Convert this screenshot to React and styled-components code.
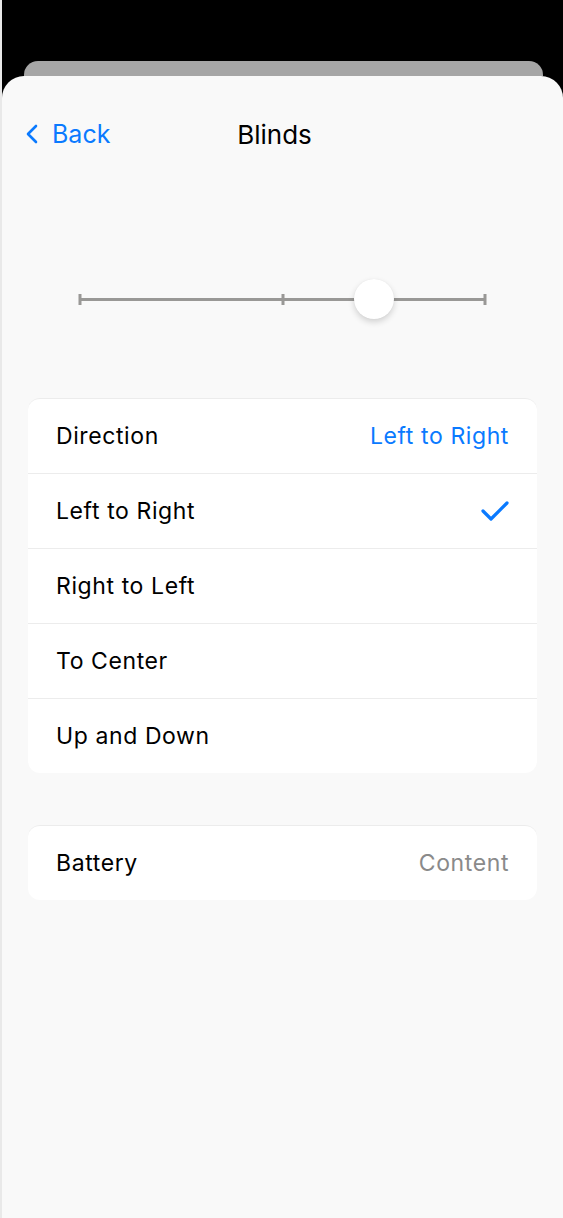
import React from 'react'
import styled, { createGlobalStyle } from 'styled-components'

const GlobalStyle = createGlobalStyle`
    html, body {
        margin: 0;
        padding: 0;
        background: #000;
    }
    body {
        font-family: Inter, "Noto Sans", "Liberation Sans", sans-serif;
        -webkit-font-smoothing: antialiased;
    }
`;

const Screen = styled.div`
    width: 563px;
    height: 1218px;
    box-sizing: border-box;
    padding-top: 61px;
    border-left: 2px solid #e9e9e9;
    background: #000;
    overflow: hidden;
    display: flex;
    flex-direction: column;
`;

const BackSheet = styled.div`
    height: 15px;
    margin: 0 20px 0 22px;
    background: #a6a6a6;
    border-radius: 14px 14px 0 0;
`;

const Sheet = styled.div`
    flex: 1;
    background: #f9f9f9;
    border-radius: 22px 22px 0 0;
    display: flex;
    flex-direction: column;
`;

const NavBar = styled.div`
    height: 116px;
    display: grid;
    grid-template-columns: 1fr auto 1fr;
    align-items: center;
    padding: 0 26px 0 24px;
    box-sizing: border-box;
`;

const BackButton = styled.button`
    display: flex;
    align-items: center;
    gap: 14px;
    border: none;
    background: none;
    padding: 0;
    color: #0a7aff;
    font-family: inherit;
    font-size: 25px;
    cursor: pointer;
    justify-self: start;
`;

const Title = styled.div`
    font-size: 26px;
    color: #000;
    margin-right: 14px;
`;

const SliderWrap = styled.div`
    height: 162px;
    display: flex;
    align-items: center;
    padding: 0 78px 0 78px;
    margin: 26px 0 18px;
`;

const Track = styled.div`
    position: relative;
    flex: 1;
    height: 3px;
    background: #999896;
`;

const Tick = styled.div`
    position: absolute;
    top: -4px;
    width: 3px;
    height: 11px;
    background: #999896;
    left: ${p => p.$at};
    transform: translateX(-50%);
`;

const Thumb = styled.div`
    position: absolute;
    top: 50%;
    width: 40px;
    height: 40px;
    border-radius: 50%;
    background: #fff;
    box-shadow: 0 3px 6px rgba(0, 0, 0, 0.16), 0 0 1px rgba(0, 0, 0, 0.08);
    transform: translate(-50%, -50%);
`;

const Card = styled.div`
    margin: 0 26px;
    background: #fff;
    border-top: 1px solid #ececec;
    border-radius: 12px;
    overflow: hidden;
    & + & {
        margin-top: 52px;
    }
`;

const Row = styled.div`
    height: 74px;
    display: flex;
    align-items: center;
    justify-content: space-between;
    padding: 0 28px 0 28px;
    font-size: 23px;
    letter-spacing: 0.6px;
    color: #000;
    & + & {
        border-top: 1px solid #ececec;
    }
`;

const Value = styled.span`
    color: ${p => (p.$muted ? '#8a8a8a' : '#0a7aff')};
`;

const Chevron = () => (
    <svg width="12" height="20" viewBox="0 0 12 20" fill="none">
        <path d="M10 2 L2 10 L10 18" stroke="#0a7aff" strokeWidth="2.6" strokeLinecap="round" strokeLinejoin="round" />
    </svg>
);

const Check = () => (
    <svg width="28" height="22" viewBox="0 0 28 22" fill="none">
        <path d="M2 11 L10 19 L26 3" stroke="#0a7aff" strokeWidth="3.2" strokeLinecap="round" strokeLinejoin="round" />
    </svg>
);

const options = ['Left to Right', 'Right to Left', 'To Center', 'Up and Down'];

const App = () => {
    const selected = 'Left to Right';
    const value = 0.725;
    return (
        <Screen>
            <GlobalStyle />
            <BackSheet />
            <Sheet>
                <NavBar>
                    <BackButton>
                        <Chevron />
                        Back
                    </BackButton>
                    <Title>Blinds</Title>
                    <div />
                </NavBar>
                <SliderWrap>
                    <Track>
                        <Tick $at="0%" />
                        <Tick $at="50%" />
                        <Tick $at="100%" />
                        <Thumb style={{ left: `${value * 100}%` }} />
                    </Track>
                </SliderWrap>
                <Card>
                    <Row>
                        Direction
                        <Value>{selected}</Value>
                    </Row>
                    {options.map(o => (
                        <Row key={o}>
                            {o}
                            {o === selected && <Check />}
                        </Row>
                    ))}
                </Card>
                <Card>
                    <Row>
                        Battery
                        <Value $muted>Content</Value>
                    </Row>
                </Card>
            </Sheet>
        </Screen>
    )
}

export default App
